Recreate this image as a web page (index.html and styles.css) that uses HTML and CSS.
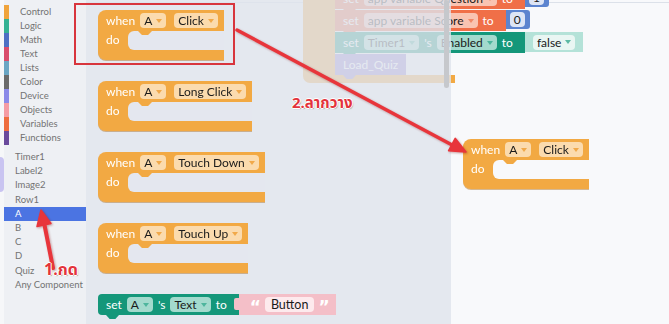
FILE: index.html
```html
<!DOCTYPE html>
<html>
<head>
<meta charset="utf-8">
<title>Blocks editor</title>
<link rel="stylesheet" href="styles.css">
</head>
<body>
<div class="app">
  <aside class="toolbox">
    <ul class="cats">
      <li style="--c:#f0a43c">Control</li>
      <li style="--c:#34b294">Logic</li>
      <li style="--c:#4d6fc4">Math</li>
      <li style="--c:#d94c6b">Text</li>
      <li style="--c:#6aa6c4">Lists</li>
      <li style="--c:#6b6b6b">Color</li>
      <li style="--c:#8b8ae8">Device</li>
      <li style="--c:#f59ca4">Objects</li>
      <li style="--c:#ee6d3f">Variables</li>
      <li style="--c:#6a4a9c">Functions</li>
    </ul>
    <ul class="comps">
      <li>Timer1</li>
      <li>Label2</li>
      <li>Image2</li>
      <li>Row1</li>
      <li class="sel">A</li>
      <li>B</li>
      <li>C</li>
      <li>D</li>
      <li>Quiz</li>
      <li>Any Component</li>
    </ul>
    <span class="peek"></span>
  </aside>

  <main class="canvas">
    <!-- blocks already on the workspace -->
    <div class="proc">
      <div class="proc-arm"></div>
      <div class="proc-foot"></div>
    </div>
    <div class="stack">
      <div class="chain">
        <div class="stmt var"><span>set</span><span class="fld">app variable Question<i></i></span><span>to</span></div>
        <div class="val num"><span class="fld">1</span></div>
      </div>
      <div class="chain">
        <div class="stmt var"><span>set</span><span class="fld">app variable Score<i></i></span><span>to</span></div>
        <div class="val num"><span class="fld">0</span></div>
      </div>
      <div class="chain">
        <div class="stmt teal"><span>set</span><span class="fld">Timer1<i></i></span><span>'s</span><span class="fld">Enabled<i></i></span><span>to</span></div>
        <div class="val bool"><span class="fld">false<i></i></span></div>
      </div>
      <div class="chain">
        <div class="stmt call"><span>Load_Quiz</span></div>
      </div>
    </div>

    <div class="ev dropped">
      <div class="ev-head"><span>when</span><span class="fld">A<i></i></span><span class="fld wide">Click<i></i></span></div>
      <div class="ev-body"><span class="arm">do</span><span class="mouth"></span></div>
      <div class="ev-foot"></div>
    </div>

    <section class="flyout">
      <div class="ev">
        <div class="ev-head"><span>when</span><span class="fld">A<i></i></span><span class="fld wide">Click<i></i></span></div>
        <div class="ev-body"><span class="arm">do</span><span class="mouth"></span></div>
        <div class="ev-foot"></div>
      </div>
      <div class="ev">
        <div class="ev-head"><span>when</span><span class="fld">A<i></i></span><span class="fld wide">Long Click<i></i></span></div>
        <div class="ev-body"><span class="arm">do</span><span class="mouth"></span></div>
        <div class="ev-foot"></div>
      </div>
      <div class="ev">
        <div class="ev-head"><span>when</span><span class="fld">A<i></i></span><span class="fld wide">Touch Down<i></i></span></div>
        <div class="ev-body"><span class="arm">do</span><span class="mouth"></span></div>
        <div class="ev-foot"></div>
      </div>
      <div class="ev">
        <div class="ev-head"><span>when</span><span class="fld">A<i></i></span><span class="fld wide">Touch Up<i></i></span></div>
        <div class="ev-body"><span class="arm">do</span><span class="mouth"></span></div>
        <div class="ev-foot"></div>
      </div>
      <div class="chain">
        <div class="stmt teal"><span>set</span><span class="fld">A<i></i></span><span>'s</span><span class="fld">Text<i></i></span><span>to</span></div>
        <div class="val str"><b>&#8220;</b><span class="fld">Button</span><b>&#8221;</b></div>
      </div>
      <span class="scroll"></span>
    </section>
  </main>

  <!-- annotations -->
  <span class="pick"></span>
  <svg class="marks" width="669" height="324" viewBox="0 0 669 324">
    <g fill="#e8353b" stroke="#e8353b" stroke-linecap="round" stroke-linejoin="round">
      <line x1="237" y1="30" x2="454" y2="146" stroke-width="3.5"/>
      <polygon points="466,152 448.6,150.7 455.2,138.3" stroke-width="1.5"/>
      <line x1="53" y1="268" x2="44.5" y2="225" stroke-width="4"/>
      <polygon points="41,210 51,223.5 37,226.5" stroke-width="1.5"/>
    </g>
  </svg>
  <span class="note n1">1.กด</span>
  <span class="note n2">2.ลากวาง</span>
</div>
</body>
</html>
```

FILE: styles.css
```css
body {
  margin: 0;
  background: #f8f9fb;
  font-family: 'Lato', 'Noto Sans', sans-serif;
}

ul {
  list-style: none;
  margin: 0;
  padding: 0;
}

.app {
  position: relative;
  width: 669px;
  height: 324px;
  overflow: hidden;
  display: flex;
}

/* toolbox on the left */
.toolbox {
  position: relative;
  width: 86px;
  flex: none;
  background: #eef0f4;
  box-shadow: inset 4px 0 0 #f6f7f9;
  padding-top: 5px;
  font-size: 9.5px;
  color: #737373;
}

.cats li,
.comps li {
  height: 14px;
  line-height: 14px;
  margin-left: 4px;
  padding-left: 11px;
  border-left: 5px solid var(--c);
  white-space: nowrap;
}

.comps {
  margin-top: 5px;
}

.comps li {
  height: 14.2px;
  line-height: 14.2px;
  border-left-color: #dfe1e6;
}

.comps li.sel {
  background: #4b74e2;
  color: #fff;
}

.peek {
  position: absolute;
  left: -4px;
  top: 157px;
  width: 8px;
  height: 35px;
  border-radius: 4px;
  background: #c9c4f1;
}

/* workspace */
.canvas {
  position: relative;
  flex: 1;
  background: linear-gradient(#f8f9fb 2px, #dce1e9 2px, #dce1e9 3px, #f8f9fb 3px);
  font-size: 12px;
  color: #fff;
}

.fld {
  display: inline-flex;
  align-items: center;
  gap: 4px;
  height: 15px;
  padding: 0 4px;
  border-radius: 4px;
  background: var(--fld);
  color: #1a1a1a;
}

.fld i {
  width: 0;
  height: 0;
  border-left: 3px solid transparent;
  border-right: 3px solid transparent;
  border-top: 4px solid var(--arr);
}

/* event handler block */
.ev {
  --blk: #f2a943;
  --fld: #fbdbae;
  --arr: #f1a94a;
  --mouth: #e4e7ef;
  display: flex;
  flex-direction: column;
  width: max-content;
  filter: drop-shadow(0 1px 0 rgba(170, 105, 20, 0.45));
}

.ev-head {
  display: flex;
  align-items: center;
  gap: 5px;
  height: 21px;
  padding: 0 6px 0 8px;
  background: var(--blk);
  border-radius: 8px 0 0 0;
}

.ev-head .wide {
  margin-left: 3px;
}

.ev-body {
  display: flex;
  height: 19px;
  background: linear-gradient(90deg, var(--blk) 40px, transparent 40px);
}

.ev-body .arm {
  width: 22px;
  padding-left: 8px;
  line-height: 18px;
  background: var(--blk);
}

.mouth {
  position: relative;
  flex: 1;
  background: var(--mouth);
  border-radius: 6px 0 0 6px;
}

.mouth::before {
  content: '';
  position: absolute;
  left: 10px;
  top: 0;
  width: 14px;
  height: 4px;
  background: var(--blk);
  clip-path: polygon(0 0, 100% 0, 72% 100%, 28% 100%);
}

.ev-foot {
  height: 10px;
  background: var(--blk);
  border-radius: 0 0 0 8px;
}

.dropped {
  position: absolute;
  left: 377px;
  top: 139px;
  --mouth: #f8f9fb;
}

/* statement and value blocks */
.chain {
  display: flex;
  align-items: flex-start;
}

.stmt {
  position: relative;
  display: flex;
  align-items: center;
  gap: 5px;
  height: 21px;
  padding: 0 12px 0 8px;
  background: var(--blk);
  border-radius: 4px 0 0 4px;
  white-space: nowrap;
}

.stmt::after {
  content: '';
  position: absolute;
  left: 8px;
  bottom: -4px;
  width: 13px;
  height: 4px;
  background: var(--blk);
  clip-path: polygon(0 0, 100% 0, 72% 100%, 28% 100%);
}

.stmt.teal {
  --blk: #14977a;
  --fld: #a3dacd;
  --arr: #4db59d;
}

.stmt.var {
  --blk: #f06f48;
  --fld: #f9c4b2;
  --arr: #f08a6a;
}

.stmt.call {
  --blk: #9582cf;
  padding-right: 8px;
}

.val {
  display: flex;
  align-items: center;
  gap: 6px;
  height: 21px;
  background: var(--blk);
  white-space: nowrap;
}

.val.num {
  --blk: #5c84cf;
  --fld: #dde5f5;
  height: 19px;
  margin-left: -3px;
  padding: 0 5px 0 7px;
  border-radius: 3px;
}

.val.bool {
  --blk: #b4e2d8;
  --fld: #e9f6f3;
  --arr: #5cb9a4;
  height: 20px;
  padding: 0 8px 0 8px;
}

.val.str {
  position: relative;
  --blk: #f4bfc8;
  --fld: #fdeaed;
  gap: 4px;
  padding: 0 6px 0 11px;
}

.val.str .fld {
  padding: 0 6px;
  font-size: 12.5px;
}

.val.str::before {
  content: '';
  position: absolute;
  left: -5px;
  top: 4px;
  width: 6px;
  height: 12px;
  border-radius: 2px 0 0 2px;
  background: var(--blk);
}

.val.str b {
  font-family: 'DejaVu Sans', sans-serif;
  font-size: 17px;
  line-height: 17px;
  height: 12px;
  color: #fff;
}

/* blocks sitting on the workspace, partly under the flyout */
.proc {
  position: absolute;
  left: 217px;
  top: -30px;
  display: flex;
  flex-direction: column;
}

.proc-arm {
  width: 32px;
  height: 105px;
  background: #f2a943;
}

.proc-foot {
  width: 152px;
  height: 8px;
  background: #f2a943;
  border-radius: 0 0 0 7px;
}

.stack {
  position: absolute;
  left: 249px;
  top: -12px;
  display: flex;
  flex-direction: column;
  gap: 1px;
}

.stack .stmt {
  border-radius: 0;
}

/* flyout drawn over the workspace */
.flyout {
  position: absolute;
  left: 0;
  top: 0;
  bottom: 0;
  width: 365px;
  box-sizing: border-box;
  padding: 10px 0 0 12px;
  display: flex;
  flex-direction: column;
  align-items: flex-start;
  gap: 21px;
  background: rgba(223, 227, 236, 0.8);
}

.scroll {
  position: absolute;
  right: 2px;
  top: 0;
  width: 5px;
  height: 88px;
  border-radius: 3px;
  background: #c6c8cc;
}

/* annotations */
.pick {
  position: absolute;
  left: 74px;
  top: 3px;
  width: 157px;
  height: 58px;
  border: 2px solid #d8353d;
}

.marks {
  position: absolute;
  left: 0;
  top: 0;
  filter: drop-shadow(1px 1px 1px rgba(120, 0, 0, 0.35));
}

.note {
  position: absolute;
  font-family: 'Noto Sans Thai', 'Noto Sans', 'DejaVu Sans', sans-serif;
  font-weight: bold;
  color: #e3333b;
  text-shadow: 1px 0 0 #fff, -1px 0 0 #fff, 0 1px 0 #fff, 0 -1px 0 #fff,
    1px 1px 1px rgba(0, 0, 0, 0.4);
  white-space: nowrap;
}

.n1 {
  left: 44px;
  top: 258px;
  font-size: 16px;
}

.n2 {
  left: 292px;
  top: 92px;
  font-size: 15px;
}
```
